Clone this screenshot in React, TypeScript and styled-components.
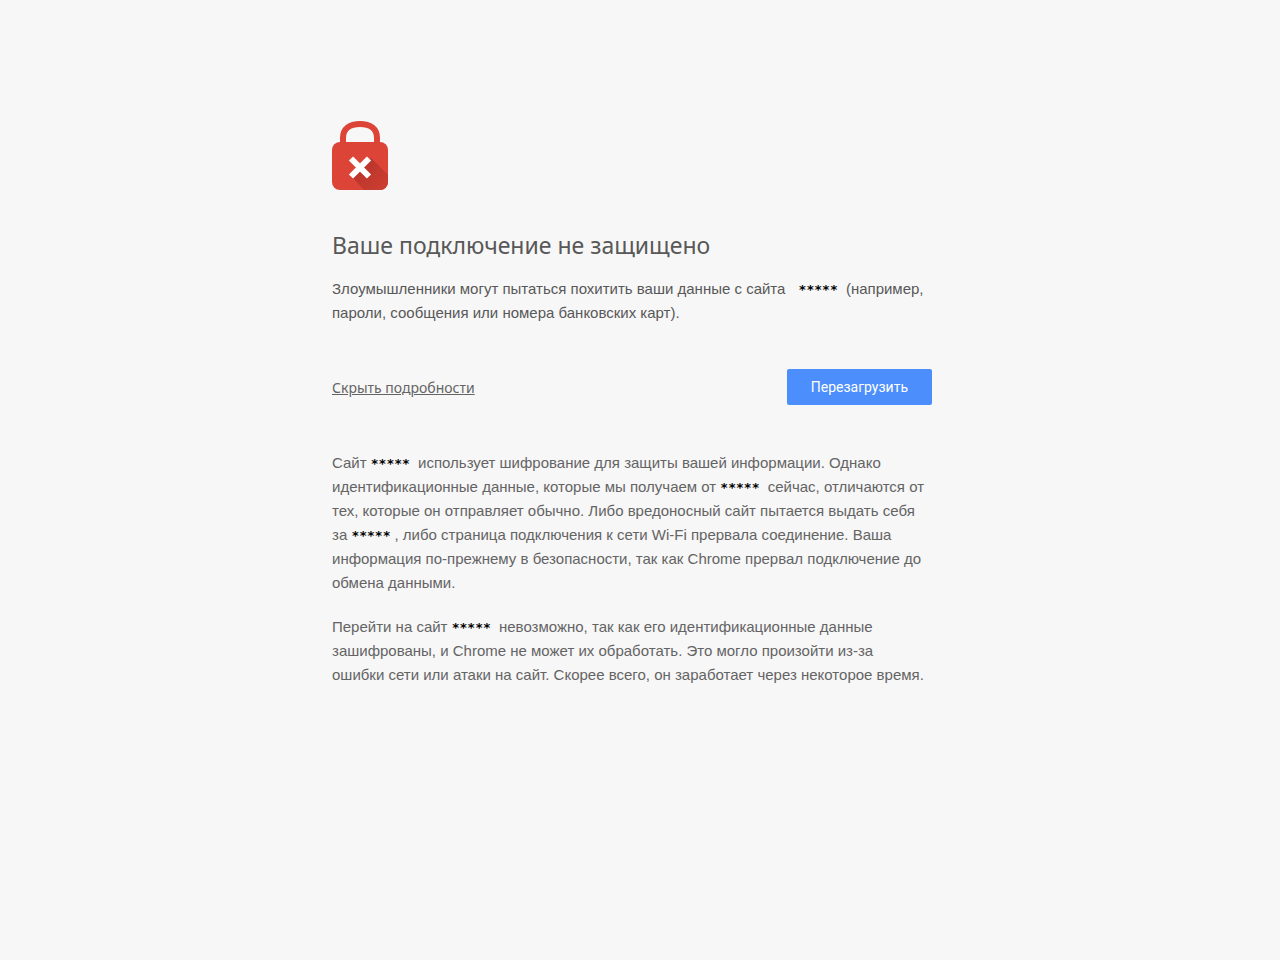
import React from "react";
import styled, { createGlobalStyle } from "styled-components";

const GlobalStyle = createGlobalStyle`
  * { box-sizing: border-box; }
  body {
    margin: 0;
    background: #f7f7f7;
    color: #646464;
    font-family: "Liberation Sans", Arial, sans-serif;
    font-size: 15px;
    line-height: 24px;
  }
`;

const Page = styled.main`
  max-width: 632px;
  margin: 0 auto;
  padding: 120px 24px 40px 8px;
`;

const LockIcon = styled.svg`
  display: block;
  width: 56px;
  height: 72px;
`;

const Title = styled.h1`
  margin: 38px 0 17px;
  color: #585858;
  font-family: "Noto Sans", sans-serif;
  font-size: 23px;
  font-weight: 400;
  line-height: 30px;
`;

const Paragraph = styled.p<{ $strong?: boolean }>`
  margin: 0 0 20px;
  color: ${(p) => (p.$strong ? "#585858" : "#646464")};
`;

const Line = styled.span`
  display: block;
  white-space: nowrap;
`;

const Host = styled.span<{ $wide?: boolean }>`
  margin: 0 4px 0 ${(p) => (p.$wide ? 9 : 0)}px;
  color: #000;
  font-family: "DejaVu Sans Mono", monospace;
  font-size: 13px;
  font-weight: 700;
  line-height: 1;
`;

const Actions = styled.div`
  display: flex;
  align-items: center;
  justify-content: space-between;
  margin: 44px 0 46px;
`;

const DetailsLink = styled.a`
  padding-top: 2px;
  color: #646464;
  font-family: "Noto Sans", sans-serif;
  font-size: 14px;
  text-decoration: underline;
`;

const ReloadButton = styled.button`
  height: 36px;
  padding: 0 24px;
  border: 0;
  border-radius: 2px;
  background: #4c8efb;
  color: #fff;
  font-family: Roboto, sans-serif;
  font-size: 14px;
  line-height: 20px;
  cursor: pointer;
`;

export default function App() {
  return (
    <>
      <GlobalStyle />
      <Page>
        <LockIcon viewBox="0 0 56 72" aria-hidden="true">
          <defs>
            <linearGradient id="shade" gradientUnits="userSpaceOnUse" x1="28" y1="46" x2="50" y2="68">
              <stop offset="0" stopColor="#b9352b" />
              <stop offset="1" stopColor="#cb3d31" />
            </linearGradient>
            <clipPath id="body">
              <rect y="22" width="56" height="48" rx="8" />
            </clipPath>
          </defs>
          <path d="M11 24V18C11 8.500 18 4 28 4S45 8.500 45 18V24" fill="none" stroke="#db4437" strokeWidth="6" />
          <rect y="22" width="56" height="48" rx="8" fill="#db4437" />
          <path d="M39 38 58 57V72H34L20 57Z" fill="url(#shade)" clipPath="url(#body)" />
          <path d="M19 38.500 37 56.500M37 38.500 19 56.500" stroke="#fff" strokeWidth="6" />
        </LockIcon>
        <Title>Ваше подключение не защищено</Title>
        <Paragraph $strong>
          <Line>
            Злоумышленники могут пытаться похитить ваши данные с сайта <Host $wide>*****</Host> (например,
          </Line>
          <Line>пароли, сообщения или номера банковских карт).</Line>
        </Paragraph>
        <Actions>
          <DetailsLink href="#details">Скрыть подробности</DetailsLink>
          <ReloadButton type="button">Перезагрузить</ReloadButton>
        </Actions>
        <section id="details">
          <Paragraph>
            <Line>
              Сайт <Host>*****</Host> использует шифрование для защиты вашей информации. Однако
            </Line>
            <Line>
              идентификационные данные, которые мы получаем от <Host>*****</Host> сейчас, отличаются от
            </Line>
            <Line>тех, которые он отправляет обычно. Либо вредоносный сайт пытается выдать себя</Line>
            <Line>
              за <Host>*****</Host>, либо страница подключения к сети Wi-Fi прервала соединение. Ваша
            </Line>
            <Line>информация по-прежнему в безопасности, так как Chrome прервал подключение до</Line>
            <Line>обмена данными.</Line>
          </Paragraph>
          <Paragraph>
            <Line>
              Перейти на сайт <Host>*****</Host> невозможно, так как его идентификационные данные
            </Line>
            <Line>зашифрованы, и Chrome не может их обработать. Это могло произойти из-за</Line>
            <Line>ошибки сети или атаки на сайт. Скорее всего, он заработает через некоторое время.</Line>
          </Paragraph>
        </section>
      </Page>
    </>
  );
}
